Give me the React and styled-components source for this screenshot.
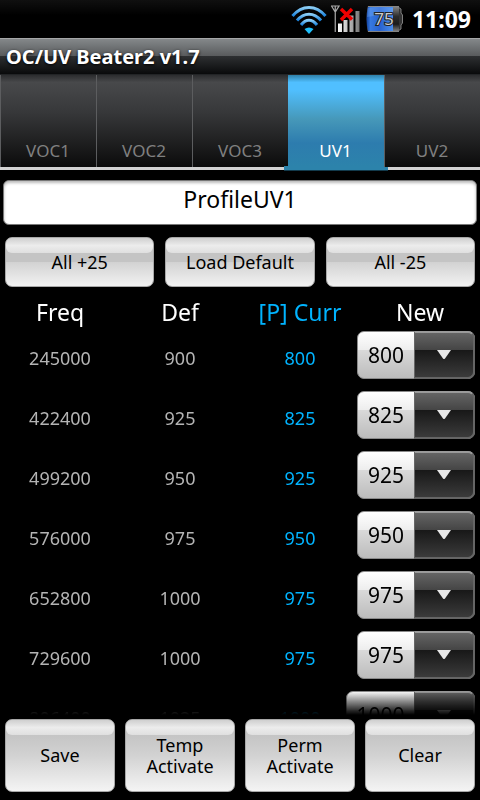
import { useState } from 'react';
import styled, { createGlobalStyle } from 'styled-components';

const GlobalStyle = createGlobalStyle`
    * {
        box-sizing: border-box;
    }

    body {
        margin: 0;
        background-color: #000;
        font-family: "Noto Sans", "Open Sans", sans-serif;
    }

    button,
    input,
    select {
        font-family: inherit;
    }
`;

const Screen = styled.div`
    display: flex;
    flex-direction: column;
    height: 100vh;
    background-color: #000;
    color: #fff;
`;

const StatusBar = styled.header`
    display: flex;
    align-items: center;
    justify-content: flex-end;
    flex: none;
    gap: 4px;
    height: 38px;
    padding-right: 9px;
    background: linear-gradient(#101010, #000 40%);
`;

const Clock = styled.time`
    margin-left: 4px;
    font-size: 23px;
    font-weight: 700;
`;

const TitleBar = styled.h1`
    flex: none;
    height: 37px;
    margin: 0;
    padding: 0 6px;
    border-top: 1px solid #a5a7a8;
    border-bottom: 1px solid #222426;
    background: linear-gradient(#84888a, #595b5d 48%, #2e3032 48%, #090a0b);
    font-size: 20px;
    line-height: 35px;
    text-shadow: 0 1px 3px #000;
`;

const TabBar = styled.nav`
    display: grid;
    grid-template-columns: repeat(5, 1fr);
    flex: none;
    height: 95px;
    border-bottom: 3px solid #d2d2d2;
`;

const Tab = styled.button`
    position: relative;
    display: flex;
    align-items: flex-end;
    justify-content: center;
    padding: 0 1px 4px 0;
    border: 0;
    border-left: ${(props) => (props.$active ? '0' : '1px solid #5c5d5f')};
    background: ${(props) => props.$active
        ? 'linear-gradient(#2f80a8, #50bfff 8%, #50bfff 16%, #4698b9 48%, #2d7cae 74%, #2c83ab)'
        : 'linear-gradient(#2b2c2e, #48494b 8%, #37383a 40%, #0b0b0b)'};
    color: ${(props) => (props.$active ? '#fff' : '#808080')};
    font-size: 17px;
    line-height: 24px;

    &::after {
        content: '';
        display: ${(props) => (props.$active ? 'block' : 'none')};
        position: absolute;
        right: -4px;
        bottom: -4px;
        left: -4px;
        height: 4px;
        border-bottom: 1px solid #123a4c;
        background-color: #2c83ab;
    }
`;

const Profile = styled.div`
    flex: none;
    padding: 10px 3px 12px;
`;

const ProfileInput = styled.input`
    display: block;
    width: 100%;
    height: 45px;
    padding: 0 8px 8px;
    border: 1px solid #777;
    border-radius: 6px;
    background-color: #fff;
    box-shadow: inset 0 2px 3px #bbb;
    color: #000;
    font-size: 23px;
    text-align: center;
`;

const ButtonRow = styled.div`
    display: grid;
    grid-template-columns: repeat(${(props) => props.$columns}, 1fr);
    flex: none;
    gap: ${(props) => (props.$columns === 3 ? '11px' : '10px')};
    padding: 0 5px;
`;

const Button = styled.button`
    position: relative;
    z-index: 0;
    height: ${(props) => (props.$tall ? '73px' : '50px')};
    padding: 0 8px;
    border: 1px solid #a8a8a8;
    border-radius: 7px;
    background: ${(props) => props.$tall
        ? 'linear-gradient(#c4c4c4 20%, #d2d2d2 50%, #f4f4f4)'
        : 'linear-gradient(#c4c4c4 50%, #d2d2d2 50%, #f2f2f2)'};
    color: #000;
    font-size: 18px;
    line-height: 21px;

    &::before {
        content: '';
        position: absolute;
        z-index: -1;
        top: 0;
        right: 0;
        left: 0;
        height: 15px;
        border-radius: 6px;
        background: linear-gradient(#cfcfcf, #ececec 50%, #dfdfdf);
    }
`;

const List = styled.main`
    flex: 1;
    min-height: 0;
    margin-bottom: 4px;
    padding-top: 10px;
    overflow-y: auto;
    scrollbar-width: none;
    mask-image: linear-gradient(#000 calc(100% - 24px), transparent);
`;

const Table = styled.table`
    width: 100%;
    border-collapse: collapse;
    table-layout: fixed;
`;

const HeadCell = styled.th`
    height: 31px;
    padding: 0;
    color: ${(props) => (props.$current ? '#00b4ff' : '#fff')};
    font-size: 23px;
    font-weight: 400;
    line-height: 31px;
`;

const Cell = styled.td`
    height: 60px;
    padding: 0;
    color: ${(props) => (props.$current ? '#00b4ff' : '#b4b4b4')};
    font-size: 18px;
    text-align: center;
`;

const SpinnerCell = styled.td`
    padding: 3px 5px 0 0;
    vertical-align: top;
`;

const Spinner = styled.div`
    position: relative;
    width: ${(props) => (props.$wide ? '129px' : '118px')};
    float: right;
`;

const Select = styled.select`
    appearance: none;
    display: block;
    width: 100%;
    height: 48px;
    padding: 0 60px 0 0;
    border: 1px solid #8a8a8a;
    border-radius: 7px;
    background:
        linear-gradient(#666, #444 40%, #181818 40%, #3c3c3c) 100% 0 / 60px 100% no-repeat,
        linear-gradient(#fff, #ededed 40%, #d9d9d9 40%, #bcbcbc);
    color: #000;
    font-size: 21px;
    text-align: center;
    text-align-last: center;
`;

const ArrowBox = styled.div`
    position: absolute;
    top: 0;
    right: 0;
    display: flex;
    align-items: center;
    justify-content: center;
    width: 61px;
    height: 48px;
    border: 2px solid #656565;
    border-top-color: #9a9a9a;
    border-left: 1px solid #666;
    border-radius: 0 7px 7px 0;
    pointer-events: none;
`;

const Footer = styled.footer`
    flex: none;
    padding-bottom: 8px;
`;

const tabs = ['VOC1', 'VOC2', 'VOC3', 'UV1', 'UV2'];

const voltages = [];
for (let mv = 700; mv <= 1300; mv += 25) {
    voltages.push(mv);
}

const initialRows = [
    { freq: 245000, def: 900, curr: 800 },
    { freq: 422400, def: 925, curr: 825 },
    { freq: 499200, def: 950, curr: 925 },
    { freq: 576000, def: 975, curr: 950 },
    { freq: 652800, def: 1000, curr: 975 },
    { freq: 729600, def: 1000, curr: 975 },
    { freq: 806400, def: 1025, curr: 1000 },
];

const WifiIcon = () => (
    <svg width="36" height="38" viewBox="0 0 36 38" fill="none" strokeWidth="3">
        <defs>
            <linearGradient id="wifi" x1="0" y1="0" x2="0" y2="1">
                <stop offset="0" stopColor="#8bcdf5" />
                <stop offset="1" stopColor="#1b83dc" />
            </linearGradient>
        </defs>
        <path d="M1.5 16C11 4.5 25 4.5 34.5 16" stroke="url(#wifi)" />
        <path d="M6 20.500C13 12 23 12 30 20.500" stroke="url(#wifi)" />
        <path d="M10 25C15 18.500 21 18.500 26 25" stroke="url(#wifi)" />
        <path d="M13.500 29Q18 26 22.500 29L18 34Z" fill="#1fc0fb" />
    </svg>
);

const SignalIcon = () => (
    <svg width="30" height="38" viewBox="0 0 30 38" fill="none">
        <defs>
            <linearGradient id="bar" x1="0" x2="1">
                <stop offset="0" stopColor="#fff" />
                <stop offset="1" stopColor="#777" />
            </linearGradient>
        </defs>
        <path d="M.5 6H8L4.250 12ZM4.250 6V32" stroke="#aaa" strokeWidth="1.200" />
        <path d="M7 23.500h4V32H7zM12.500 20h4v12h-4zM18.500 15.500h4V32h-4zM24.500 11h4v21h-4z" fill="url(#bar)" />
        <path d="M10 9L21 19.500M21 9L10 20" stroke="#f00000" strokeWidth="3.500" />
    </svg>
);

const BatteryIcon = () => (
    <svg width="39" height="38" viewBox="0 0 39 38">
        <defs>
            <linearGradient id="cell" x1="0" x2="1">
                <stop offset="0" stopColor="#10409f" />
                <stop offset=".15" stopColor="#3679e0" />
                <stop offset=".5" stopColor="#2862cf" />
                <stop offset="1" stopColor="#4b8eea" />
            </linearGradient>
            <linearGradient id="shell" x1="0" y1="0" x2="0" y2="1">
                <stop offset="0" stopColor="#8a8a8a" />
                <stop offset=".4" stopColor="#2c2c2c" />
                <stop offset=".7" stopColor="#1a1a1a" />
                <stop offset="1" stopColor="#8a8a8a" />
            </linearGradient>
        </defs>
        <path d="M33 7l3 2v4l1.500 2v8L36 25v4l-3 2z" fill="#333" stroke="#999" strokeWidth=".8" />
        <path d="M3 6H34V32H3Q0 19 3 6Z" fill="url(#shell)" />
        <path d="M3 7H28V31H3Q0 19 3 7Z" fill="url(#cell)" />
        <path d="M3 8Q16 5 28 8V13Q14 15 2 17Z" fill="#85b8ff" opacity=".3" />
        <text
            x="19"
            y="25"
            textAnchor="middle"
            fontSize="17"
            fill="#ccc"
            stroke="#222"
            strokeWidth="2"
            paintOrder="stroke"
        >
            75
        </text>
    </svg>
);

const App = () => {
    const [activeTab, setActiveTab] = useState('UV1');
    const [profile, setProfile] = useState('ProfileUV1');
    const [values, setValues] = useState(initialRows.map((row) => row.curr));

    const shiftAll = (step) => setValues(values.map((value) => value + step));

    const setValue = (index, value) => {
        setValues(values.map((old, i) => (i === index ? value : old)));
    };

    return (
        <>
            <GlobalStyle />
            <Screen>
                <StatusBar>
                    <WifiIcon />
                    <SignalIcon />
                    <BatteryIcon />
                    <Clock>11:09</Clock>
                </StatusBar>

                <TitleBar>OC/UV Beater2 v1.7</TitleBar>

                <TabBar>
                    {tabs.map((tab) => (
                        <Tab key={tab} $active={tab === activeTab} onClick={() => setActiveTab(tab)}>
                            {tab}
                        </Tab>
                    ))}
                </TabBar>

                <Profile>
                    <ProfileInput
                        aria-label="Profile name"
                        value={profile}
                        onChange={(e) => setProfile(e.target.value)}
                    />
                </Profile>

                <ButtonRow $columns={3}>
                    <Button onClick={() => shiftAll(25)}>All +25</Button>
                    <Button onClick={() => setValues(initialRows.map((row) => row.def))}>Load Default</Button>
                    <Button onClick={() => shiftAll(-25)}>All -25</Button>
                </ButtonRow>

                <List>
                    <Table>
                        <thead>
                            <tr>
                                <HeadCell>Freq</HeadCell>
                                <HeadCell>Def</HeadCell>
                                <HeadCell $current>[P] Curr</HeadCell>
                                <HeadCell>New</HeadCell>
                            </tr>
                        </thead>
                        <tbody>
                            {initialRows.map((row, index) => (
                                <tr key={row.freq}>
                                    <Cell>{row.freq}</Cell>
                                    <Cell>{row.def}</Cell>
                                    <Cell $current>{row.curr}</Cell>
                                    <SpinnerCell>
                                        <Spinner $wide={values[index] >= 1000}>
                                            <Select
                                                aria-label={`New voltage for ${row.freq}`}
                                                value={values[index]}
                                                onChange={(e) => setValue(index, Number(e.target.value))}
                                            >
                                                {voltages.map((mv) => (
                                                    <option key={mv} value={mv}>{mv}</option>
                                                ))}
                                            </Select>
                                            <ArrowBox>
                                                <svg width="14" height="10" viewBox="0 0 14 10">
                                                    <path d="M0 0H14L8 8.500Q7 9.500 6 8.500Z" fill="#e8e8e8" />
                                                </svg>
                                            </ArrowBox>
                                        </Spinner>
                                    </SpinnerCell>
                                </tr>
                            ))}
                        </tbody>
                    </Table>
                </List>

                <Footer>
                    <ButtonRow $columns={4}>
                        <Button $tall>Save</Button>
                        <Button $tall>Temp Activate</Button>
                        <Button $tall>Perm Activate</Button>
                        <Button $tall>Clear</Button>
                    </ButtonRow>
                </Footer>
            </Screen>
        </>
    );
};

export default App;
